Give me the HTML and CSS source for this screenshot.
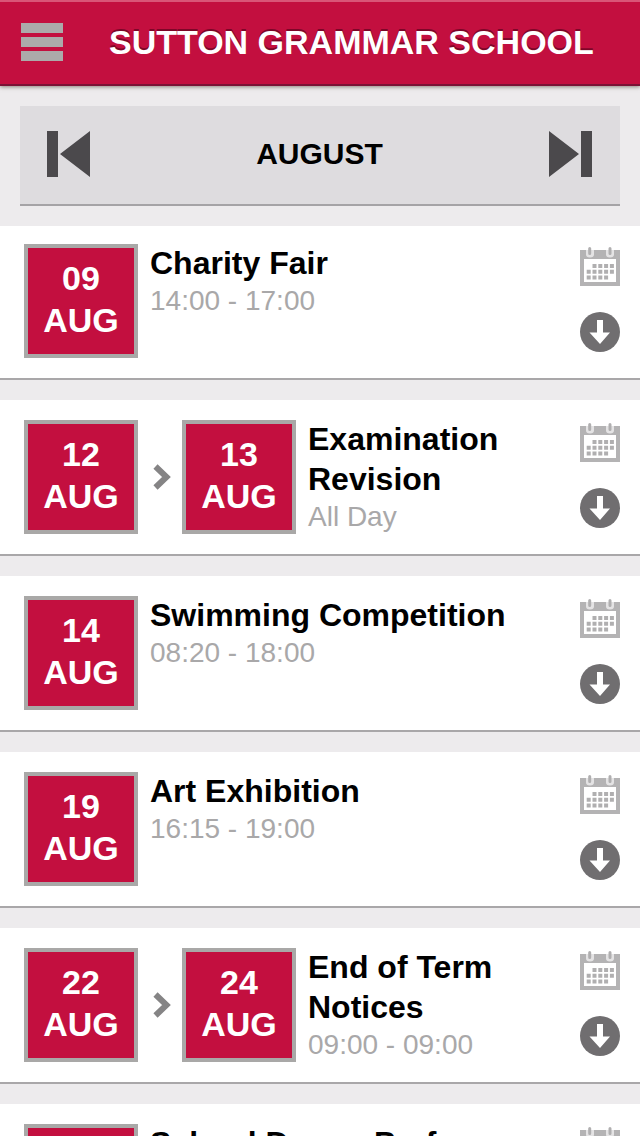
FILE: index.html
```html
<!DOCTYPE html>
<html lang="en">
<head>
<meta charset="utf-8">
<title>Sutton Grammar School</title>
<link rel="stylesheet" href="styles.css">
</head>
<body>
<svg class="defs" width="0" height="0" aria-hidden="true">
  <symbol id="calendar" viewBox="0 0 40 40">
    <path fill="#b4b3b4" d="M0 4h40v36H0z"/>
    <path fill="#fff" d="M4 13h32v23H4z"/>
    <path fill="#b0afb0" d="M12.500 18h4v4h-4zM18.300 18h4v4h-4zM24.100 18h4v4h-4zM29.900 18h4v4h-4zM6.700 23.800h4v4h-4zM12.500 23.800h4v4h-4zM18.300 23.800h4v4h-4zM24.100 23.800h4v4h-4zM29.900 23.800h4v4h-4zM6.700 29.600h4v4h-4zM12.500 29.600h4v4h-4zM18.300 29.600h4v4h-4zM24.100 29.600h4v4h-4z"/>
    <path fill="#e4e3e4" d="M6 4h8v4.500a4 3 0 0 1-8 0zM26 4h8v4.500a4 3 0 0 1-8 0z"/>
    <path fill="none" stroke="#b0afb0" stroke-width="3" stroke-linecap="round" d="M9.700 2.500v5M30 2.500v5"/>
  </symbol>
  <symbol id="down" viewBox="0 0 40 40">
    <circle cx="20" cy="20" r="20" fill="#706e70"/>
    <path fill="#fff" d="M17 8h6v12.500h7L20 32 9.500 20.500H17z"/>
  </symbol>
  <symbol id="chevron" viewBox="0 0 18 26">
    <path fill="none" stroke="#858485" stroke-width="6" d="M2.500 2.500L13.500 13 2.500 23.500"/>
  </symbol>
</svg>
<div class="screen">
  <header class="header">
    <svg class="menu" viewBox="0 0 42 38"><path fill="#acaaaa" d="M0 0h42v10H0zM0 14h42v10H0zM0 28h42v10H0z"/></svg>
    <h1 class="school">SUTTON GRAMMAR SCHOOL</h1>
  </header>
  <nav class="month">
    <svg class="step" viewBox="0 0 44 46"><path fill="#4b494c" d="M0 0h11v46H0zM43 0v46L13 23z"/></svg>
    <span class="month-name">AUGUST</span>
    <svg class="step" viewBox="0 0 44 46"><path fill="#4b494c" d="M33 0h11v46H33zM1 0v46l30-23z"/></svg>
  </nav>
  <main class="events">
    <article class="event">
      <div class="date">09<br>AUG</div>
      <div class="info"><h2 class="title">Charity Fair</h2><p class="time">14:00 - 17:00</p></div>
      <div class="actions"><svg class="icon"><use href="#calendar"/></svg><svg class="icon"><use href="#down"/></svg></div>
    </article>
    <article class="event">
      <div class="date">12<br>AUG</div>
      <svg class="chevron"><use href="#chevron"/></svg>
      <div class="date">13<br>AUG</div>
      <div class="info"><h2 class="title">Examination Revision</h2><p class="time">All Day</p></div>
      <div class="actions"><svg class="icon"><use href="#calendar"/></svg><svg class="icon"><use href="#down"/></svg></div>
    </article>
    <article class="event">
      <div class="date">14<br>AUG</div>
      <div class="info"><h2 class="title">Swimming Competition</h2><p class="time">08:20 - 18:00</p></div>
      <div class="actions"><svg class="icon"><use href="#calendar"/></svg><svg class="icon"><use href="#down"/></svg></div>
    </article>
    <article class="event">
      <div class="date">19<br>AUG</div>
      <div class="info"><h2 class="title">Art Exhibition</h2><p class="time">16:15 - 19:00</p></div>
      <div class="actions"><svg class="icon"><use href="#calendar"/></svg><svg class="icon"><use href="#down"/></svg></div>
    </article>
    <article class="event">
      <div class="date">22<br>AUG</div>
      <svg class="chevron"><use href="#chevron"/></svg>
      <div class="date">24<br>AUG</div>
      <div class="info"><h2 class="title">End of Term Notices</h2><p class="time">09:00 - 09:00</p></div>
      <div class="actions"><svg class="icon"><use href="#calendar"/></svg><svg class="icon"><use href="#down"/></svg></div>
    </article>
    <article class="event">
      <div class="date"></div>
      <div class="info"><h2 class="title">School Drama Performance</h2></div>
      <div class="actions"><svg class="icon"><use href="#calendar"/></svg><svg class="icon"><use href="#down"/></svg></div>
    </article>
  </main>
</div>
</body>
</html>
```

FILE: styles.css
```css
* { box-sizing: border-box; }
body {
  margin: 0;
  font-family: "Liberation Sans", Arial, Helvetica, sans-serif;
  background: #edebed;
}
h1, h2, p { margin: 0; }
svg { display: block; flex: none; }
.defs { position: absolute; }
.screen { height: 1136px; overflow: hidden; }
.header {
  display: flex;
  align-items: center;
  height: 86px;
  padding-left: 21px;
  background: #c30f3f;
  border-top: 2px solid #d95577;
  border-bottom: 2px solid #7b1235;
  box-shadow: 0 1px 4px rgba(60, 50, 30, 0.55);
}
.menu { width: 42px; height: 38px; margin-top: -2px; }
.school {
  margin: -2px 0 0 46px;
  font-size: 34px;
  line-height: 40px;
  color: #fff;
  white-space: nowrap;
  text-shadow: 0 -2px 0 rgba(80, 0, 25, 0.6);
}
.month {
  display: flex;
  align-items: center;
  justify-content: space-between;
  height: 100px;
  margin: 20px 20px;
  padding: 0 28px 2px 27px;
  background: #dedcdf;
  border-bottom: 2px solid #a5a3a6;
}
.step { width: 44px; height: 46px; }
.month-name { font-size: 30px; line-height: 36px; font-weight: bold; color: #000; }
.events { display: flex; flex-direction: column; gap: 20px; }
.event {
  display: flex;
  align-items: flex-start;
  flex: none;
  height: 156px;
  padding: 20px 20px 0 24px;
  background: #fff;
  border-bottom: 2px solid #a9a7a9;
}
.event:first-child { height: 154px; padding-top: 18px; }
.date {
  flex: none;
  width: 114px;
  height: 114px;
  padding-top: 9px;
  background: #c30f3f;
  border: 4px solid #a9a8a7;
  color: #fff;
  font-size: 34px;
  line-height: 42px;
  font-weight: bold;
  text-align: center;
}
.chevron { width: 18px; height: 26px; margin: 44px 11px 0 15px; }
.info { flex: 1; min-width: 0; margin: -1px 0 0 12px; }
.title { font-size: 32px; line-height: 40px; color: #000; }
.time { font-size: 28px; line-height: 36px; color: #a9a8a9; }
.actions { display: flex; flex-direction: column; gap: 26px; padding-top: 2px; }
.icon { width: 40px; height: 40px; }
```
